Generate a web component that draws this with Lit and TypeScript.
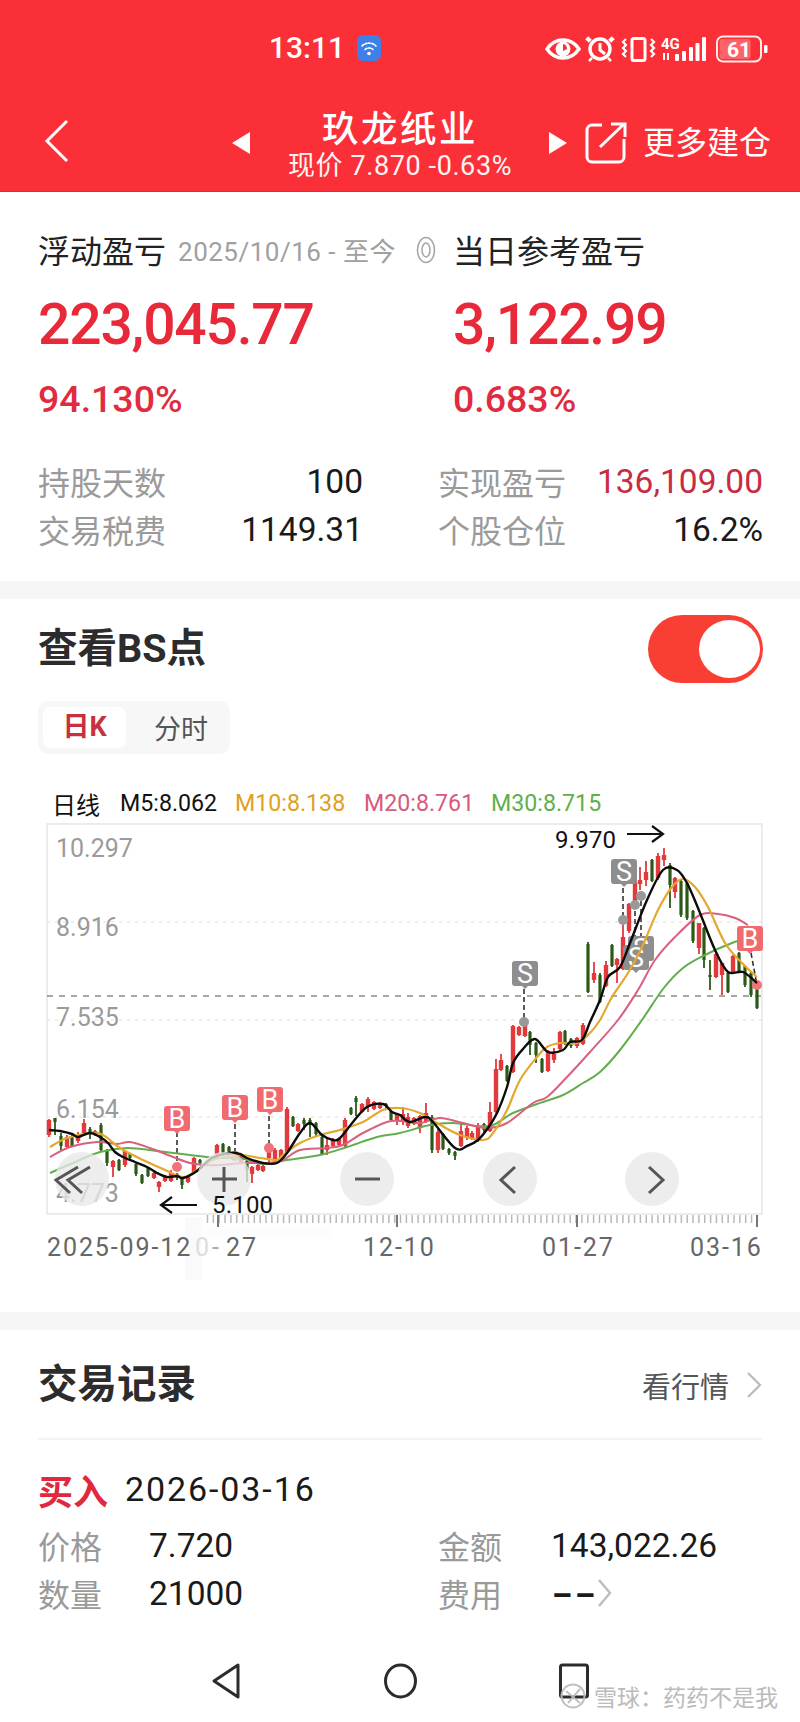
import { LitElement, html, css, svg } from "lit";
import { customElement } from "lit/decorators.js";

type C = [number, number, number, number, number, number];
// x, wick top, wick bottom, body top, body bottom, 1=red 0=green
const candles: C[] = [
  [49,1119,1137,1120,1135,1],[55,1118,1135,1118,1122,0],[61,1133,1150,1136,1146,0],[67,1135,1149,1137,1147,1],[72,1135,1147,1137,1146,0],[78,1132,1143,1136,1141,1],[84,1119,1134,1123,1133,1],[90,1127,1139,1129,1133,0],[95,1130,1136,1131,1134,1],[101,1123,1152,1125,1150,0],[107,1149,1166,1151,1163,0],[113,1160,1177,1161,1167,1],[119,1159,1171,1160,1170,0],[125,1150,1167,1151,1165,1],[130,1153,1160,1154,1158,0],[136,1163,1176,1164,1174,0],[142,1174,1184,1175,1183,0],[148,1167,1177,1168,1176,0],[154,1172,1179,1173,1178,1],[159,1181,1192,1182,1187,1],[165,1175,1182,1176,1181,1],[171,1170,1182,1173,1181,1],[177,1173,1180,1174,1178,0],[182,1178,1189,1179,1185,0],[188,1175,1183,1176,1182,1],[194,1157,1173,1158,1172,1],[200,1159,1164,1160,1163,0],
  [217,1144,1155,1145,1154,1],[223,1143,1154,1144,1153,0],[229,1146,1155,1147,1154,0],[241,1155,1164,1156,1162,1],[247,1160,1182,1161,1170,0],[252,1166,1183,1167,1174,1],[258,1164,1171,1165,1170,1],[263,1165,1172,1166,1171,1],[269,1147,1162,1148,1158,1],[275,1148,1160,1150,1159,1],[281,1149,1159,1150,1158,1],[287,1107,1153,1109,1152,1],[293,1116,1127,1117,1126,0],[298,1123,1132,1124,1131,1],[304,1118,1130,1120,1124,0],[310,1118,1137,1120,1125,0],[316,1122,1136,1123,1134,0],[322,1135,1155,1137,1154,0],[327,1139,1155,1145,1150,1],[333,1138,1147,1140,1146,1],[339,1138,1146,1139,1145,1],[345,1118,1147,1120,1146,1],[351,1107,1115,1108,1114,0],[356,1096,1116,1098,1102,0],[362,1103,1113,1104,1112,1],[368,1097,1112,1099,1107,1],[374,1101,1110,1102,1109,1],[380,1102,1109,1103,1108,1],[386,1103,1109,1104,1106,0],[391,1110,1122,1111,1120,0],[397,1113,1125,1114,1121,1],
  [403,1107,1125,1114,1122,1],[408,1113,1128,1117,1126,1],[414,1117,1125,1118,1124,1],[420,1115,1133,1116,1127,1],[426,1103,1123,1113,1122,1],[432,1115,1153,1117,1150,0],[438,1128,1153,1132,1150,1],[443,1133,1150,1134,1149,0],[449,1148,1155,1149,1153,0],[455,1151,1160,1152,1156,0],[461,1123,1147,1131,1146,1],[467,1126,1140,1128,1138,1],[472,1131,1140,1133,1138,1],[478,1123,1142,1127,1139,1],[484,1123,1132,1124,1130,0],[490,1102,1132,1112,1131,1],[496,1059,1113,1069,1112,1],[501,1054,1071,1060,1070,1],[507,1065,1082,1066,1081,0],[513,1025,1073,1026,1072,1],[519,1026,1036,1027,1035,1],[525,1020,1037,1024,1036,1],[530,1031,1055,1032,1045,0],[536,1042,1063,1043,1055,0],[542,1058,1073,1059,1072,0],[548,1050,1072,1051,1071,1],[554,1048,1063,1054,1060,1],[560,1031,1050,1032,1049,1],[565,1030,1045,1031,1044,0],[571,1038,1048,1039,1046,0],[577,1037,1048,1038,1046,1],[583,1023,1045,1025,1044,1],
  [588,942,993,944,992,0],[594,962,983,973,980,1],[600,973,1003,975,1002,0],[606,961,987,965,986,1],[612,944,967,945,966,0],[617,958,983,959,965,1],[623,918,970,937,969,1],[629,903,933,904,931,1],[635,881,908,882,907,1],[640,867,890,880,884,1],[646,861,886,872,880,1],[652,859,882,860,881,0],[658,853,880,856,878,1],[664,848,866,855,860,1],[670,863,908,865,885,0],[675,877,898,878,892,1],[681,880,917,881,915,0],[687,882,920,883,918,0],[693,910,943,911,941,0],[699,923,954,923,948,1],[704,927,968,928,960,0],[710,960,990,975,977,0],[716,953,978,954,977,1],[722,963,995,963,975,1],[728,972,993,973,992,0],[733,955,973,956,972,1],[739,952,973,953,971,0],[745,965,987,966,985,0],[751,972,997,973,995,0],[757,987,1009,988,1008,0],
];

const m5: number[][] = [[49,1130],[60,1131],[72,1134],[78,1137],[90,1133],[100,1137],[108,1143],[115,1152],[123,1157],[135,1162],[147,1167],[157,1173],[167,1177],[177,1176],[183,1178],[197,1171],[212,1158],[230,1153],[240,1154],[247,1158],[263,1163],[277,1163],[287,1153],[300,1133],[310,1123],[322,1135],[333,1140],[340,1138],[353,1122],[367,1107],[383,1104],[392,1112],[400,1115],[410,1122],[425,1117],[433,1122],[455,1148],[467,1146],[478,1140],[488,1128],[497,1113],[507,1087],[513,1063],[523,1049],[535,1039],[548,1052],[563,1050],[570,1042],[582,1040],[590,1022],[600,1000],[608,977],[620,967],[630,943],[647,900],[663,870],[677,870],[687,883],[698,908],[715,950],[728,972],[743,972],[757,983]];
const m10: number[][] = [[50,1147],[67,1138],[90,1133],[103,1135],[120,1148],[143,1160],[163,1169],[183,1177],[197,1170],[213,1160],[240,1155],[260,1158],[277,1160],[283,1155],[300,1143],[320,1135],[340,1130],[363,1122],[383,1110],[400,1108],[420,1113],[437,1123],[460,1135],[483,1140],[493,1133],[507,1110],[520,1080],[537,1057],[547,1047],[560,1043],[577,1043],[590,1033],[600,1020],[612,997],[628,973],[642,947],[658,910],[672,887],[683,879],[695,887],[708,907],[725,943],[742,963],[757,977]];
const m20: number[][] = [[50,1157],[70,1147],[97,1142],[117,1144],[130,1142],[150,1148],[173,1157],[190,1163],[207,1165],[220,1165],[243,1163],[267,1163],[283,1160],[300,1150],[327,1148],[343,1145],[363,1133],[387,1122],[400,1121],[420,1123],[440,1118],[463,1123],[487,1128],[507,1123],[533,1103],[547,1097],[567,1077],[590,1052],[618,1020],[638,990],[655,960],[675,937],[700,915],[718,914],[735,918],[748,925]];
const m30: number[][] = [[50,1173],[73,1163],[100,1152],[127,1148],[157,1151],[190,1155],[220,1158],[240,1158],[263,1164],[287,1160],[320,1155],[347,1147],[377,1137],[400,1133],[430,1125],[453,1123],[477,1126],[493,1125],[513,1113],[537,1104],[563,1095],[583,1083],[600,1072],[620,1050],[642,1020],[663,989],[683,968],[705,955],[732,943],[752,937]];

function smooth(p: number[][]): string {
  let d = `M${p[0][0]} ${p[0][1]}`;
  for (let i = 0; i < p.length - 1; i++) {
    const a = p[Math.max(0, i - 1)], b = p[i], c = p[i + 1], e = p[Math.min(p.length - 1, i + 2)];
    const c1 = [b[0] + (c[0] - a[0]) / 6, b[1] + (c[1] - a[1]) / 6];
    const c2 = [c[0] - (e[0] - b[0]) / 6, c[1] - (e[1] - b[1]) / 6];
    d += `C${c1[0].toFixed(1)} ${c1[1].toFixed(1)} ${c2[0].toFixed(1)} ${c2[1].toFixed(1)} ${c[0]} ${c[1]}`;
  }
  return d;
}

function badge(x: number, y: number, label: string, buy: boolean) {
  // x,y = top-left of a 26x25 marker
  return svg`<g class=${buy ? "bbuy" : "bsell"}>
    <path d="M${x + 3} ${y}H${x + 23}a3 3 0 0 1 3 3V${y + 22}a3 3 0 0 1-3 3H${x + 16}l-3 3-3-3H${x + 3}a3 3 0 0 1-3-3V${y + 3}a3 3 0 0 1 3-3Z"/>
    <text class="btxt" x=${x + 13} y=${y + 22} text-anchor="middle">${label}</text></g>`;
}
function leader(x1: number, y1: number, x2: number, y2: number, buy: boolean) {
  return svg`<line class="lead" x1=${x1} y1=${y1} x2=${x2} y2=${y2}/><circle class=${buy ? "dotb" : "dots"} cx=${x2} cy=${y2} r="5"/>`;
}

const ticks: number[] = [];
for (let x = 207.5; x < 758; x += 5.85) ticks.push(x);

@customElement("app-root")
export class AppRoot extends LitElement {
  static styles = css`
    :host { display: block; width: 800px; height: 1722px; overflow: hidden; background: #fff; position: relative;
      font-family: Roboto, "Noto Sans CJK SC", sans-serif; color: #222; }
    .head { height: 191px; background: #fb2f37; color: #fff; border-bottom: 1px solid #b04048; }
    .status { height: 96px; display: flex; align-items: center; padding-left: 269px; box-sizing: border-box; }
    .time { font-size: 30px; font-weight: 500; line-height: 34px; }
    .wifi { margin-left: 12px; width: 24px; height: 26px; display: block; }
    .sicons { margin-left: 155px; display: block; }
    .nav { display: grid; grid-template-columns: 231px 20px 298px 19px 17px 41px 17px auto; align-items: center; height: 95px; }
    .back { margin-left: 44px; display: block; margin-top: -6px; }
    .tri { display: block; margin-top: -2px; }
    .title { text-align: center; }
    .t1 { font-size: 36.5px; font-weight: 500; line-height: 42px; letter-spacing: 2.5px; margin-top: 3px; }
    .t2 { font-size: 27px; line-height: 30px; letter-spacing: .6px; white-space: nowrap; opacity: .95; }
    .share { grid-column: 6; display: block; margin-top: -2px; }
    .more { grid-column: 8; font-size: 32px; line-height: 40px; white-space: nowrap; margin-top: -2px; }

    .band { height: 18px; background: #f6f6f6; }
    .s1 { height: 389px; box-sizing: border-box; padding: 44px 38px 0; }
    .r1 { display: flex; align-items: center; height: 32px; }
    .l31 { font-size: 32px; line-height: 32px; white-space: nowrap; }
    .date { font-size: 26px; color: #a0a0a0; margin-left: 12px; letter-spacing: .5px; line-height: 32px; white-space: nowrap; width: 238px; }
    .info { display: block; margin-right: 17px; margin-top: -4px; }
    .grid2 { display: grid; grid-template-columns: 415px auto; }
    .big { margin-top: 27px; font-size: 57px; line-height: 60px; font-weight: 500; color: #e8293a; letter-spacing: -1.2px; }
    .pct { margin-top: 24px; font-size: 37.5px; line-height: 40px; font-weight: 500; color: #df2c40; }
    .stats { margin-top: 38px; display: grid; grid-template-columns: 325px 325px; column-gap: 75px; }
    .stat { display: flex; justify-content: space-between; height: 48px; align-items: center; }
    .lbl { font-size: 32px; color: #9a9a9a; white-space: nowrap; }
    .val { font-size: 33.5px; color: #1a1a1a; }
    .val.red { color: #c82c42; }

    .s2 { height: 713px; box-sizing: border-box; padding: 16px 0 0; }
    .s2top { display: flex; justify-content: space-between; align-items: center; padding: 0 37px 0 38px; height: 68px; }
    .h2 { font-size: 39.5px; font-weight: 700; color: #2c2c2c; white-space: nowrap; line-height: 44px; }
    .tog { width: 115px; height: 68px; border-radius: 34px; background: #f93f33; box-sizing: border-box; padding: 5px 3px; display: flex; justify-content: flex-end; }
    .knob { width: 61px; height: 58px; border-radius: 50%; background: #fff; }
    .tabs { margin: 18px 0 0 38px; width: 192px; height: 53px; background: #f7f7f7; border-radius: 10px; box-sizing: border-box; padding: 6px 5px; display: flex; align-items: center; }
    .tab { width: 83px; height: 41px; background: #fff; border-radius: 8px; text-align: center; line-height: 41px; font-size: 27px; font-weight: 700; color: #c9303e; }
    .tab2 { margin-left: 28px; font-size: 27px; color: #555; white-space: nowrap; }
    .legend { margin: 32px 0 2px; height: 34px; display: flex; align-items: center; padding-left: 52px; font-size: 23.2px; white-space: nowrap; }
    .legend span { display: block; }
    .lg0 { color: #111; width: 68px; font-size: 24px; }
    .lg1 { color: #111; width: 115px; }
    .lg2 { color: #e0a020; width: 129px; }
    .lg3 { color: #d85a7a; width: 127px; }
    .lg4 { color: #5fb04a; }
    .chart { display: block; width: 800px; height: 490px; }
    .frame { fill: none; stroke: #e6e6e6; stroke-width: 1.5; }
    .grid { stroke: #dedede; stroke-width: 1.2; stroke-dasharray: 3 5; }
    .cur { stroke: #8a8a7a; stroke-width: 1.3; stroke-dasharray: 6 6; }
    .smudge { fill: #fafafa; }
    .smudge2 { fill: #fdfdfd; }
    .up { fill: #e23a3c; stroke: #e23a3c; }
    .dn { fill: #2b5a17; stroke: #2b5a17; }
    .wick { stroke-width: 1.8; }
    .ma { fill: none; stroke-width: 2; stroke-linejoin: round; }
    .ma5 { stroke: #0c0c0c; stroke-width: 2.4; }
    .ma10 { stroke: #e3a82e; stroke-width: 2.2; }
    .ma20 { stroke: #d9607e; }
    .ma30 { stroke: #62ae4c; }
    .ylab { font-size: 25px; fill: #9a9a9a; }
    .xlab { font-size: 25px; fill: #666; letter-spacing: 1.9px; }
    .xfade { font-size: 25px; fill: #ddd; letter-spacing: 1.9px; }
    .xmid { font-size: 25px; fill: #aaa; letter-spacing: 1.9px; }
    .ext { font-size: 24px; fill: #111; letter-spacing: .2px; }
    .arrow { fill: none; stroke: #111; stroke-width: 2.2; }
    .bbuy path { fill: #f06a70; }
    .bsell path { fill: #8e8e8e; }
    .btxt { font-size: 27px; fill: #fff; }
    .lead { stroke: #333; stroke-width: 1.6; stroke-dasharray: 5 3; }
    .dotb { fill: #ef7378; }
    .dots { fill: #999; }
    .tk { stroke: #b8b8b8; stroke-width: 1.5; }
    .tkM { stroke: #777; stroke-width: 2; }
    .ctl { fill: #e8e8e8; fill-opacity: .78; }
    .ci { fill: none; stroke: #565656; stroke-width: 3; }

    .s3 { height: 321px; box-sizing: border-box; padding: 35px 38px 0; }
    .s3top { display: flex; justify-content: space-between; align-items: center; height: 40px; padding-bottom: 33px; border-bottom: 2px solid #f4f4f4; box-sizing: content-box; }
    .more2 { display: flex; align-items: center; font-size: 29px; color: #555; white-space: nowrap; }
    .chev { display: block; margin-left: 17px; }
    .row0 { margin-top: 29px; display: flex; align-items: center; height: 40px; white-space: nowrap; }
    .buy { font-size: 35px; font-weight: 700; color: #e0293e; width: 87px; }
    .dt { font-size: 34px; color: #1a1a1a; letter-spacing: 1.9px; }
    .tbl { margin-top: 12px; display: grid; grid-template-columns: 111px 289px 113px 1fr; grid-auto-rows: 48px; align-items: center; }
    .lb2 { font-size: 32px; color: #9a9a9a; white-space: nowrap; }
    .v2 { font-size: 33.5px; color: #1a1a1a; white-space: nowrap; }
    .fee { display: flex; align-items: center; font-weight: 700; }
    .dash { display: block; width: 40px; transform: scaleX(1.75); transform-origin: left center; }
    .fee svg { display: block; margin-left: 6px; }
    .foot { height: 60px; display: grid; grid-template-columns: 212px 28px 144px 33px 142px 30px; align-items: center; }
    .foot svg { display: block; }
    .fi { fill: none; stroke: #2c2c2c; stroke-width: 3; stroke-linejoin: round; }
    .mark { position: absolute; left: 558px; top: 1679px; display: flex; align-items: center; color: #b4b4b4; font-size: 23px; white-space: nowrap; opacity: .9; text-shadow: 0 0 1px #fff; }
    .mark svg { display: block; margin-right: 6px; }
  `;

  render() {
    return html`
      <div class="head">
        <div class="status">
          <span class="time">13:11</span>
          <svg class="wifi" viewBox="0 0 24 26">
            <rect width="24" height="26" rx="6" fill="#3f7fe8"/>
            <g fill="none" stroke="#fff" stroke-width="1.6" stroke-linecap="round" stroke-dasharray="2 1.5">
              <path d="M5 11a10 10 0 0 1 14 0"/><path d="M8 14.5a6 6 0 0 1 8 0"/>
            </g>
            <circle cx="12" cy="18.5" r="1.8" fill="#fff"/>
          </svg>
          <svg class="sicons" width="232" height="40" viewBox="536 28 232 40">
            <path d="M547 49c4-6 10-9 16-9s12 3 16 9c-4 6-10 9-16 9s-12-3-16-9Z" fill="none" stroke="#fff" stroke-width="3.4"/>
            <circle cx="563" cy="49" r="7.5" fill="#fff"/><path d="M563 44a5 5 0 0 1 4 5l-4 2Z" fill="#fb2f37"/>
            <g stroke="#fff" fill="none">
              <circle cx="600" cy="49" r="10" stroke-width="3.4"/>
              <path d="M600 43v7l5 4" stroke-width="3"/>
              <path d="M590 38l-3 3M610 38l3 3" stroke-width="5"/>
              <path d="M592 58l-3 3M608 58l3 3" stroke-width="2.5"/>
            </g>
            <rect x="632" y="38.5" width="13" height="22" rx="2" fill="none" stroke="#fff" stroke-width="3"/>
            <path d="M626 39l-3 3 3 3-3 3 3 3-3 3 3 3M651 39l3 3-3 3 3 3-3 3 3 3-3 3" fill="none" stroke="#fff" stroke-width="2.2"/>
            <text x="661" y="49" font-size="15" font-weight="700" fill="#fff">4G</text>
            <path d="M664 53v7M668 53v7" stroke="#fff" stroke-width="2"/>
            <g fill="#fff"><rect x="675" y="54" width="4" height="7" rx="1"/><rect x="682" y="51" width="4" height="10" rx="1"/><rect x="689" y="47" width="4" height="14" rx="1"/><rect x="695.500" y="43" width="4" height="18" rx="1"/><rect x="702" y="37" width="4" height="24" rx="1"/></g>
            <rect x="717" y="36.500" width="44" height="25" rx="6" fill="none" stroke="#fff" stroke-opacity=".9" stroke-width="2"/>
            <rect x="719.500" y="39" width="31" height="20" rx="3" fill="#fff" fill-opacity=".25"/>
            <rect x="764" y="45" width="3.500" height="8" rx="1" fill="#fff"/>
            <text x="739" y="57" text-anchor="middle" font-size="21" font-weight="700" fill="#fff">61</text>
          </svg>
        </div>
        <div class="nav">
          <svg class="back" width="26" height="44" viewBox="0 0 26 44"><path d="M23 2 3 22l20 20" fill="none" stroke="#fff" stroke-width="3"/></svg>
          <svg class="tri" width="20" height="24" viewBox="0 0 20 24"><path d="M19 1v22L1 12Z" fill="#fff"/></svg>
          <div class="title">
            <div class="t1">玖龙纸业</div>
            <div class="t2">现价 7.870 -0.63%</div>
          </div>
          <svg class="tri" width="19" height="24" viewBox="0 0 19 24"><path d="M0 1v22l18-11Z" fill="#fff"/></svg>
          <svg class="share" width="42" height="42" viewBox="0 0 42 42"><path d="M17 3H7a5 5 0 0 0-5 5v27a5 5 0 0 0 5 5h27a5 5 0 0 0 5-5V17" fill="none" stroke="#fff" stroke-width="3"/><path d="M15 25 39 2M26 2h14v13" fill="none" stroke="#fff" stroke-width="3"/></svg>
          <span class="more">更多建仓</span>
        </div>
      </div>

      <div class="s1">
        <div class="r1">
          <span class="l31">浮动盈亏</span>
          <span class="date">2025/10/16 - 至今</span>
          <svg class="info" width="20" height="28" viewBox="0 0 20 28"><g fill="none" stroke="#a8a8a8" stroke-width="1.6"><ellipse cx="10" cy="14" rx="8.500" ry="12.500"/><ellipse cx="10" cy="14" rx="4" ry="7"/></g></svg>
          <span class="l31">当日参考盈亏</span>
        </div>
        <div class="grid2 big"><span>223,045.77</span><span>3,122.99</span></div>
        <div class="grid2 pct"><span>94.130%</span><span>0.683%</span></div>
        <div class="stats">
          <div class="stat"><span class="lbl">持股天数</span><span class="val">100</span></div>
          <div class="stat"><span class="lbl">实现盈亏</span><span class="val red">136,109.00</span></div>
          <div class="stat"><span class="lbl">交易税费</span><span class="val">1149.31</span></div>
          <div class="stat"><span class="lbl">个股仓位</span><span class="val">16.2%</span></div>
        </div>
      </div>
      <div class="band"></div>

      <div class="s2">
        <div class="s2top">
          <span class="h2">查看BS点</span>
          <div class="tog"><div class="knob"></div></div>
        </div>
        <div class="tabs"><div class="tab">日K</div><span class="tab2">分时</span></div>
        <div class="legend">
          <span class="lg0">日线</span><span class="lg1">M5:8.062</span><span class="lg2">M10:8.138</span><span class="lg3">M20:8.761</span><span class="lg4">M30:8.715</span>
        </div>
        ${this.chart()}
      </div>
      <div class="band"></div>

      <div class="s3">
        <div class="s3top">
          <span class="h2">交易记录</span>
          <span class="more2">看行情<svg class="chev" width="16" height="26" viewBox="0 0 16 26"><path d="M2 1l12 12L2 25" fill="none" stroke="#bdbdbd" stroke-width="2.400"/></svg></span>
        </div>
        <div class="row0"><span class="buy">买入</span><span class="dt">2026-03-16</span></div>
        <div class="tbl">
          <span class="lb2">价格</span><span class="v2">7.720</span><span class="lb2">金额</span><span class="v2">143,022.26</span>
          <span class="lb2">数量</span><span class="v2">21000</span><span class="lb2">费用</span>
          <span class="v2 fee"><span class="dash">--</span><svg width="15" height="28" viewBox="0 0 15 28"><path d="M2 1l11 13L2 27" fill="none" stroke="#bdbdbd" stroke-width="2.400"/></svg></span>
        </div>
      </div>
      <div class="foot">
        <span></span>
        <svg width="28" height="36" viewBox="0 0 28 36"><path d="M26 2v32L2 18Z" class="fi"/></svg>
        <span></span>
        <svg width="33" height="36" viewBox="0 0 33 36"><ellipse cx="16.500" cy="18" rx="15" ry="16" class="fi"/></svg>
        <span></span>
        <svg width="30" height="36" viewBox="0 0 30 36"><rect x="1.500" y="2" width="27" height="32" rx="2" class="fi"/></svg>
      </div>
      <div class="mark">
        <svg width="30" height="26" viewBox="0 0 30 26"><circle cx="15" cy="13" r="11.500" fill="none" stroke="#bbb" stroke-width="2"/><path d="M8 8l14 12M22 6 10 20" fill="none" stroke="#bbb" stroke-width="2"/></svg>
        <span>雪球：药药不是我</span>
      </div>
    `;
  }

  chart() {
    return html`<svg class="chart" viewBox="0 822 800 490">
      <rect class="smudge" x="185" y="1217" width="17" height="63"/>
      <rect class="smudge2" x="202" y="1226" width="130" height="12"/>
      <rect class="frame" x="47" y="824" width="715" height="390"/>
      <line class="grid" x1="47" x2="762" y1="922" y2="922"/>
      <line class="grid" x1="47" x2="762" y1="1020" y2="1020"/>
      <line class="grid" x1="47" x2="762" y1="1117" y2="1117"/>
      <line class="cur" x1="47" x2="762" y1="996" y2="996"/>
      ${candles.map(([x, wt, wb, bt, bb, r]) => {
        const w = r ? 4.4 : 3.2;
        return svg`
        <line class=${(r ? "up" : "dn") + " wick"} x1=${x} x2=${x} y1=${wt} y2=${wb}/>
        <rect class=${r ? "up" : "dn"} stroke-width="0" x=${x - w / 2} width=${w} y=${bt} height=${bb - bt}/>`;
      })}
      ${leader(177, 1132, 177, 1167, true)}
      ${leader(235, 1124, 235, 1156, true)}
      ${leader(269, 1116, 269, 1148, true)}
      ${leader(524, 989, 524, 1022, false)}
      ${leader(623, 888, 623, 920, false)}
      ${leader(635, 948, 635, 905, false)}
      ${leader(641, 938, 641, 896, false)}
      ${leader(751, 953, 757, 985, true)}
      <path class="ma ma30" d=${smooth(m30)}/>
      <path class="ma ma20" d=${smooth(m20)}/>
      ${badge(512, 961, "S", false)}
      ${badge(611, 859, "S", false)}
      ${badge(628, 936, "S", false)}
      ${badge(623, 945, "S", false)}
      ${badge(164, 1106, "B", true)}
      ${badge(222, 1095, "B", true)}
      ${badge(257, 1087, "B", true)}
      ${badge(737, 926, "B", true)}
      <path class="ma ma10" d=${smooth(m10)}/>
      <path class="ma ma5" d=${smooth(m5)}/>
      <text class="ylab" x="56" y="857">10.297</text>
      <text class="ylab" x="56" y="936">8.916</text>
      <text class="ylab" x="56" y="1026">7.535</text>
      <text class="ylab" x="56" y="1118">6.154</text>
      <text class="ylab" x="56" y="1202">4.773</text>
      <text class="ext" x="555" y="848">9.970</text>
      <path class="arrow" d="M627 834h36M652 826l11 8-11 8"/>
      <path class="arrow" d="M197 1205h-36M172 1197l-11 8 11 8"/>
      <circle class="ctl" cx="82" cy="1179" r="27"/>
      <circle class="ctl" cx="224" cy="1179" r="27"/>
      <circle class="ctl" cx="367" cy="1179" r="27"/>
      <circle class="ctl" cx="510" cy="1179" r="27"/>
      <circle class="ctl" cx="652" cy="1179" r="27"/>
      <path class="ci" d="M92 1167l-22 13 14 13M104 1167l-22 13 14 13" transform="translate(-14 0)"/>
      <path class="ci" d="M212 1179h25M224 1167v25"/>
      <path class="ci" d="M355 1179h25"/>
      <path class="ci" d="M515 1167l-14 13 14 13"/>
      <path class="ci" d="M649 1167l14 13-14 13"/>
      <text class="ext" x="212" y="1213">5.100</text>
      ${ticks.map((x) => svg`<line class="tk" x1=${x} x2=${x} y1="1215" y2="1223"/>`)}
      ${[218, 397, 577, 757].map((x) => svg`<line class="tkM" x1=${x} x2=${x} y1="1215" y2="1227"/>`)}
      <text class="xlab" x="47" y="1256">2025-09-12</text>
      <text class="xfade" x="195" y="1256">0</text>
      <text class="xmid" x="212" y="1256">-</text>
      <text class="xlab" x="226" y="1256">27</text>
      <text class="xlab" x="363" y="1256">12-10</text>
      <text class="xlab" x="542" y="1256">01-27</text>
      <text class="xlab" x="690" y="1256">03-16</text>
    </svg>`;
  }
}
